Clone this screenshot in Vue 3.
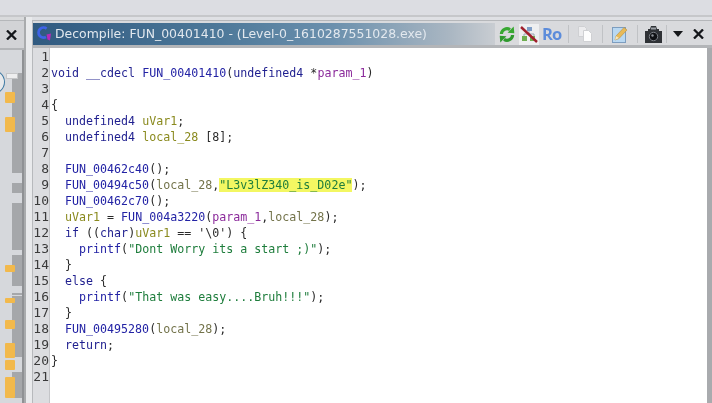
<script setup>
const S = (c, t) => ({ c, t })
const lines = [
  [],
  [S('k','void'),S('p',' '),S('k','__cdecl'),S('p',' '),S('f','FUN_00401410'),S('p','('),S('k','undefined4'),S('p',' *'),S('a','param_1'),S('p',')')],
  [],
  [S('p','{')],
  [S('p','  '),S('k','undefined4'),S('p',' '),S('v','uVar1'),S('p',';')],
  [S('p','  '),S('k','undefined4'),S('p',' '),S('v','local_28'),S('p',' [8];')],
  [],
  [S('p','  '),S('f','FUN_00462c40'),S('p','();')],
  [S('p','  '),S('f','FUN_00494c50'),S('p','('),S('l','local_28'),S('p',','),S('h','"L3v3lZ340_is_D02e"'),S('p',');')],
  [S('p','  '),S('f','FUN_00462c70'),S('p','();')],
  [S('p','  '),S('v','uVar1'),S('p',' = '),S('f','FUN_004a3220'),S('p','('),S('a','param_1'),S('p',','),S('l','local_28'),S('p',');')],
  [S('p','  '),S('k','if'),S('p',' (('),S('k','char'),S('p',')'),S('v','uVar1'),S('p'," == '\\0') {")],
  [S('p','    '),S('f','printf'),S('p','('),S('s','"Dont Worry its a start ;)"'),S('p',');')],
  [S('p','  }')],
  [S('p','  '),S('k','else'),S('p',' {')],
  [S('p','    '),S('f','printf'),S('p','('),S('s','"That was easy....Bruh!!!"'),S('p',');')],
  [S('p','  }')],
  [S('p','  '),S('f','FUN_00495280'),S('p','('),S('l','local_28'),S('p',');')],
  [S('p','  '),S('k','return'),S('p',';')],
  [S('p','}')],
  [],
]
const overviewTop = 50
const marks = [
  [92, 11], [117, 15], [265, 7], [298, 5], [320, 9], [343, 15], [360, 10], [377, 21],
]
const segments = [
  [73, 100], [183, 10], [203, 47], [255, 31], [293, 2], [296, 61], [372, 26],
]
const px = (v) => v + 'px'
</script>

<template>
  <div class="app">
    <div class="topbar"></div>
    <div class="body">
      <aside class="side">
        <div class="side-head">
          <svg width="11" height="10" viewBox="0 0 11 10"><path d="M1 0.5l9 9M10 0.5l-9 9" stroke="#14161a" stroke-width="2.3"/></svg>
        </div>
        <div class="overview">
          <span class="ring"></span>
          <span class="thumb"></span>
          <i v-for="(s, i) in segments" :key="'s' + i" class="seg" :style="{ top: px(s[0] - overviewTop), height: px(s[1]) }"></i>
          <i v-for="(m, i) in marks" :key="'m' + i" class="mark" :style="{ top: px(m[0] - overviewTop), height: px(m[1]) }"></i>
        </div>
      </aside>
      <div class="divider"></div>
      <main class="panel">
        <header class="head">
          <div class="title">
            <svg class="logo" width="16" height="16" viewBox="0 0 16 16">
              <path d="M10.6 2.6A5 5 0 1 0 10 11" fill="none" stroke="#3f63e8" stroke-width="2.8"/>
              <path d="M10.5 8.5l4.5-1-1 7-2.5-1z" fill="#b52bb8"/>
            </svg>
            <span class="title-text">Decompile: FUN_00401410 -  (Level-0_1610287551028.exe)</span>
          </div>
          <div class="tools">
            <svg class="refresh" width="16" height="17" viewBox="0 0 16 17">
              <path d="M2.4 8A5.6 5.6 0 0 1 11 3.6" fill="none" stroke="#38a832" stroke-width="3.2"/>
              <path d="M8.5 6.8l6.8.4-.6-6.6z" fill="#38a832"/>
              <path d="M13.6 9A5.6 5.6 0 0 1 5 13.4" fill="none" stroke="#2f9a2e" stroke-width="3.2"/>
              <path d="M7.5 10.2l-6.8-.4.6 6.6z" fill="#2f9a2e"/>
            </svg>
            <span class="active">
              <svg width="18" height="18" viewBox="0 0 18 18">
                <rect x="7" y="2" width="5" height="4" fill="#7f9ec8"/>
                <path d="M9 6v4M4 11V9h10v2" fill="none" stroke="#9aa7b5"/>
                <rect x="2" y="11" width="5" height="5" fill="#6fae50"/>
                <rect x="10" y="11" width="5" height="5" fill="#6fae50"/>
                <path d="M1 2l16 15" stroke="#a01f2c" stroke-width="2.4"/>
              </svg>
            </span>
            <span class="ro">Ro</span>
            <i class="sep s1"></i>
            <svg class="copy" width="16" height="16" viewBox="0 0 16 16">
              <path d="M1.5.5h6l2 2v8h-8z" fill="#ececee" stroke="#cfd0d3"/>
              <path d="M6.5 4.5h5l3 3v8h-8z" fill="#fdfdfd" stroke="#cfd0d3"/>
            </svg>
            <i class="sep s2"></i>
            <svg class="edit" width="16" height="17" viewBox="0 0 16 17">
              <rect x=".5" y="1.5" width="13" height="15" fill="#b9d8f2" stroke="#7d9dbf"/>
              <path d="M3 14l1-4 8-8.500 3 2.500-8 8.500z" fill="#e8ba58" stroke="#b98e3e" stroke-width=".6"/>
              <path d="M3 14l1-4 3 2z" fill="#f4e6c4"/>
            </svg>
            <i class="sep s3"></i>
            <svg class="camera" width="17" height="17" viewBox="0 0 17 17">
              <path d="M0 5h3V3h2l1-3h5l1 3h2v2h3v12H0z" fill="#2f3236"/>
              <rect x="6" y="1.500" width="5" height="2" fill="#9a9ea4"/>
              <circle cx="8.500" cy="10.500" r="4.200" fill="#101215" stroke="#7b7f86"/>
              <circle cx="7.500" cy="9.500" r="1.200" fill="#8e939a"/>
            </svg>
            <i class="sep s4"></i>
            <span class="caret"></span>
            <svg class="x" width="11" height="10" viewBox="0 0 11 10"><path d="M1 0.5l9 9M10 0.5l-9 9" stroke="#14161a" stroke-width="2.3"/></svg>
          </div>
        </header>
        <div class="code">
          <div class="gutter">
            <div v-for="(_, i) in lines" :key="i" class="num">{{ i + 1 }}</div>
          </div>
          <div class="src">
            <div v-for="(l, i) in lines" :key="i" class="line"><span v-for="(s, j) in l" :key="j" :class="s.c">{{ s.t }}</span></div>
          </div>
        </div>
      </main>
    </div>
  </div>
</template>

<style>
html, body { margin: 0; overflow: hidden; background: #dfe0e4; }
</style>
<style scoped>
.app { width: 712px; height: 403px; display: flex; flex-direction: column; background: #dfe0e4; overflow: hidden; filter: blur(.4px); }
.topbar { height: 15px; flex: none; background: #dcdde2; border-bottom: 2px solid #c6c7ca; }
.body { flex: 1; display: flex; min-height: 0; }
.side { width: 24px; flex: none; display: flex; flex-direction: column; background: #d9dadc; }
.side-head { height: 30px; flex: none; box-sizing: border-box; margin-top: 3px; display: flex; justify-content: flex-end; align-items: center; padding: 0 7px 0 0; background: #d2d3d6; border-top: 1px solid #b5b7ba; border-bottom: 2px solid #b3b5b8; }
.overview { flex: 1; position: relative; background: #d6d8dc; border-right: 2px solid #8f9194; }
.ring { position: absolute; left: -24px; top: 19px; width: 27px; height: 24px; border: 1px solid #3f7aa3; border-radius: 50%; background: #e9eaec; }
.thumb { position: absolute; left: 6px; top: 23px; width: 10px; height: 4px; background: #eeeeef; border: 1px solid #c5c6c8; z-index: 1; }
.seg { position: absolute; left: 12px; right: 0; background: #a5a7aa; }
.mark { position: absolute; left: 5px; width: 10px; background: #f2b94c; border-radius: 1px; z-index: 2; }
.divider { width: 8px; flex: none; background: linear-gradient(90deg, #a9abad 0 2px, #e9eaec 2px); }
.panel { flex: 1; min-width: 0; display: flex; flex-direction: column; background: #d9dadd; border-left: 1px solid #b7b9bc; margin-top: 3px; }
.head { height: 28px; flex: none; box-sizing: border-box; padding-top: 2px; display: flex; align-items: stretch; border-bottom: 3px solid #b3b5b8; border-top: 1px solid #b5b7ba; }
.title { width: 462px; flex: none; display: flex; align-items: center; gap: 3px; padding-left: 3px; box-sizing: border-box; background: linear-gradient(90deg, #305a80 0%, #4d7899 40%, #6b90ad 65%, #a9b6c2 90%, #c9cdd2 100%); color: #e2e8ee; }
.title-text { font: 12.45px/1 "DejaVu Sans", sans-serif; white-space: pre; }
.tools { flex: 1; display: flex; align-items: center; }
.refresh { margin-left: 4px; flex: none; }
.active { width: 20px; height: 21px; margin-left: 4px; background: #eeeff0; display: flex; align-items: center; justify-content: center; flex: none; }
.ro { font: 700 16.500px/1 "Open Sans", sans-serif; letter-spacing: -.8px; color: #5c8cdb; width: 18px; margin-left: 3px; flex: none; }
.sep { width: 1px; height: 18px; background: #c0c2c5; flex: none; }
.s1 { margin-left: 8px; }
.s2 { margin-left: 9px; }
.s3 { margin-left: 9px; }
.s4 { margin-left: 4px; }
.copy { margin-left: 8px; flex: none; }
.edit { margin-left: 9px; flex: none; }
.camera { margin-left: 7px; flex: none; }
.caret { width: 0; height: 0; border: 5px solid transparent; border-top: 6px solid #15171a; border-bottom: 0; margin-left: 6px; flex: none; }
.x { margin-left: 10px; flex: none; }
.code { flex: 1; display: flex; min-height: 0; background: #fff; }
.gutter { width: 16px; flex: none; background: #dcdde0; border-right: 1px solid #c4c5c8; text-align: right; font: 13px/16px "DejaVu Sans Mono", monospace; color: #3a3a3a; padding-top: 1px; }
.num { height: 16px; }
.src { flex: 1; background: #fff; font: 11.65px/16px "DejaVu Sans Mono", monospace; padding-top: 1px; padding-left: 1px; white-space: pre; border-right: 5px solid #a9abae; }
.line { height: 16px; }
.p { color: #2a2a2a; }
.k { color: #1f1f8f; }
.f { color: #2323a5; }
.v { color: #8a8a1e; }
.l { color: #73734a; }
.a { color: #8b2a9b; }
.s { color: #1e7d3c; }
.h { color: #1e7d3c; background: #f3f762; }
</style>
